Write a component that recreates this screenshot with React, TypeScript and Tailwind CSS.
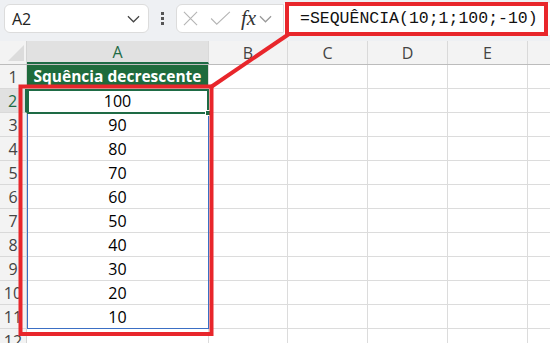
import React from "react";

const cols = [
  { label: "A", w: 182 },
  { label: "B", w: 79 },
  { label: "C", w: 80 },
  { label: "D", w: 80 },
  { label: "E", w: 80 },
  { label: "", w: 60 },
];

const values = ["100", "90", "80", "70", "60", "50", "40", "30", "20", "10", ""];

const Chevron = ({ className }: { className?: string }) => (
  <svg viewBox="0 0 14 8" className={className} fill="none" stroke="currentColor" strokeWidth="1.3">
    <path d="M1 1l6 6 6-6" />
  </svg>
);

const Toolbar = () => (
  <div className="h-[41px] bg-[#eef0f3] flex items-start pt-[4px] pl-[4px]">
    <div className="w-[145px] h-[29px] bg-white rounded-[6px] border border-[#dcdcdc] flex items-center justify-between pl-[7px] pr-[8px]">
      <span className="text-[16px] text-[#222]">A2</span>
      <Chevron className="w-[13px] h-[8px] text-[#444]" />
    </div>
    <div className="w-[27px] h-[29px] flex flex-col items-center justify-center gap-[2px]">
      <div className="w-[3px] h-[3px] bg-[#555]" />
      <div className="w-[3px] h-[3px] bg-[#555]" />
      <div className="w-[3px] h-[3px] bg-[#555]" />
    </div>
    <div className="w-[108px] h-[29px] bg-white rounded-l-[6px] border border-[#dcdcdc] flex items-center pl-[6px]">
      <svg viewBox="0 0 16 16" className="w-[15px] h-[15px] text-[#b5b5b5]" fill="none" stroke="currentColor" strokeWidth="1.2">
        <path d="M1 1l14 14M15 1L1 15" />
      </svg>
      <svg viewBox="0 0 22 16" className="w-[21px] h-[15px] ml-[12px] text-[#b5b5b5]" fill="none" stroke="currentColor" strokeWidth="1.2">
        <path d="M1 8l6 6L21 1" />
      </svg>
      <span className="ml-[10px] text-[21px] italic text-[#333] leading-none" style={{ fontFamily: '"Liberation Serif", serif' }}>
        fx
      </span>
      <Chevron className="ml-[3px] w-[13px] h-[8px] text-[#999]" />
    </div>
    <div className="flex-1 h-[32px] bg-white -mt-[1px] flex items-center pl-[16px]">
      <span className="text-[16.5px] text-[#111]" style={{ fontFamily: '"Liberation Mono", monospace' }}>
        =SEQUÊNCIA(10;1;100;-10)
      </span>
    </div>
  </div>
);

const HeaderRow = () => (
  <div className="flex h-[24px] bg-[#f3f3f3] border-b border-[#bcbcbc]">
    <div className="w-[27px] shrink-0 border-r border-[#d4d4d4] relative">
      <svg viewBox="0 0 16 16" className="absolute left-[8px] top-[4px] w-[16px] h-[16px]">
        <path d="M16 0V16H0Z" fill="#dcdcdc" />
      </svg>
    </div>
    {cols.map((c, i) => (
      <div
        key={i}
        style={{ width: c.w }}
        className={
          "shrink-0 border-r border-[#d9d9d9] flex items-center justify-center text-[16px] " +
          (i === 0 ? "bg-[#e1e1e1] text-[#1e6b45] border-b-2 border-b-[#1e6b45]" : "text-[#444]")
        }
      >
        {c.label}
      </div>
    ))}
  </div>
);

const Row = ({ n }: { n: number }) => {
  const val = n === 1 ? "Squência decrescente" : values[n - 2];
  const sel = n === 2;
  return (
    <div className="flex h-[24px]">
      <div
        className={
          "w-[27px] shrink-0 flex items-center justify-center text-[16px] border-b border-[#d9d9d9] " +
          (sel
            ? "bg-[#e1e1e1] text-[#1e6b45] border-r-2 border-r-[#1e6b45]"
            : "bg-[#f3f3f3] text-[#444] border-r border-r-[#d4d4d4]")
        }
      >
        {n}
      </div>
      {cols.map((c, i) => (
        <div
          key={i}
          style={{ width: c.w }}
          className={
            "shrink-0 border-r border-b border-[#dcdcdc] flex items-center justify-center " +
            (i === 0 && n === 1 ? "bg-[#1e6b3c] text-white font-bold text-[15.5px]" : "bg-white text-black text-[16px]")
          }
        >
          {i === 0 ? val : ""}
        </div>
      ))}
    </div>
  );
};

export default function App() {
  return (
    <div
      className="w-[550px] h-[343px] overflow-hidden relative bg-white"
      style={{ fontFamily: '"Open Sans", "Liberation Sans", sans-serif' }}
    >
      <Toolbar />
      <HeaderRow />
      {Array.from({ length: 12 }, (_, i) => (
        <Row key={i} n={i + 1} />
      ))}

      {/* selection and spill outlines */}
      <div className="absolute left-[27px] top-[89px] w-[182px] h-[240px] border border-[#3b6fc4]" />
      <div className="absolute left-[27px] top-[89px] w-[182px] h-[25px] border-2 border-[#1e6b45]" />
      <div className="absolute left-[205px] top-[110px] w-[6px] h-[6px] bg-[#1e6b45] border border-white" />

      {/* red annotations */}
      <svg className="absolute left-0 top-0" width="550" height="343">
        <rect x="20.5" y="86.5" width="191" height="247.5" fill="none" stroke="#e8262b" strokeWidth="4" />
        <rect x="287" y="4" width="259" height="30" fill="none" stroke="#e8262b" strokeWidth="4" />
        <line x1="211" y1="87" x2="289" y2="34" stroke="#e8262b" strokeWidth="4" />
      </svg>
    </div>
  );
}
